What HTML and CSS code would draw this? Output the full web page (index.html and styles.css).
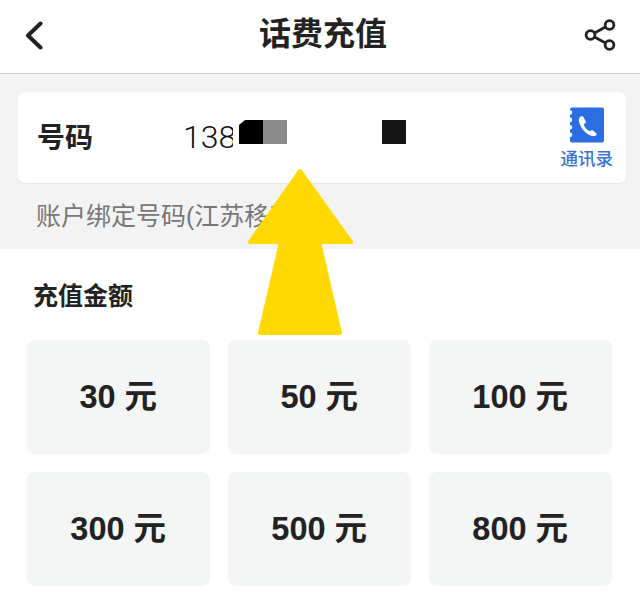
FILE: index.html
```html
<!DOCTYPE html>
<html lang="zh-CN">
<head>
<meta charset="utf-8">
<title>话费充值</title>
<link rel="stylesheet" href="styles.css">
</head>
<body>
<div class="page">
  <header class="topbar">
    <svg class="back" viewBox="0 0 20 30" width="20" height="30"><path d="M17.500 3.500 5 15.500l12.500 12" fill="none" stroke="#222" stroke-width="4" stroke-linecap="round" stroke-linejoin="round"/></svg>
    <h1 class="title">话费充值</h1>
    <svg class="share" viewBox="0 0 34 34" width="34" height="34"><g fill="none" stroke="#222" stroke-width="2.8"><circle cx="26.5" cy="7" r="4.4"/><circle cx="26.5" cy="27" r="4.4"/><circle cx="7.5" cy="17" r="4.4"/><path d="M11.5 15 22.5 9M11.5 19l11 6"/></g></svg>
  </header>
  <section class="account">
    <div class="card">
      <span class="label">号码</span>
      <span class="number">138</span>
      <div class="contacts">
        <svg class="book" viewBox="0 0 36 36" width="36" height="36"><path d="M2 2.500A2 2 0 0 1 4 .5h30a2 2 0 0 1 2 2v31a2 2 0 0 1-2 2H4a2 2 0 0 1-2-2v-3.500a2.300 2.300 0 0 0 0-4.600v-2.800a2.300 2.300 0 0 0 0-4.600v-2.800a2.300 2.300 0 0 0 0-4.600v-2.800a2.300 2.300 0 0 0 0-4.600z" fill="#2b6de5"/><path d="M11 11c1.200-1.500 3.200-2.200 4.200-1.200l2.600 4.500c.4.800 0 1.600-.8 2.200l-1.300 1c1 3 3.500 5.500 6 6.800l1.600-.8c.8-.4 1.600-.3 2.200.3l3 3c.5 1-.6 1.900-2 2.300-7 1-15.200-9-15.700-15.600-.1-1.200.3-2.100 1-3z" fill="#fff"/></svg>
        <span class="contacts-text">通讯录</span>
      </div>
    </div>
    <p class="bound">账户绑定号码(江苏移动)</p>
  </section>
  <section class="amounts">
    <h2 class="amounts-title">充值金额</h2>
    <div class="grid">
      <div class="amount">30 元</div>
      <div class="amount">50 元</div>
      <div class="amount">100 元</div>
      <div class="amount">300 元</div>
      <div class="amount">500 元</div>
      <div class="amount">800 元</div>
    </div>
  </section>
  <div class="mask mask-w"></div>
  <div class="mask mask-a"></div>
  <div class="mask mask-b"></div>
  <div class="mask mask-c"></div>
  <svg class="arrow" viewBox="0 0 108 170" width="108" height="170"><path d="M53 4 104 75H72L93 166H13L34 75H3z" fill="#ffd900" stroke="#ffd900" stroke-width="4" stroke-linejoin="round"/></svg>
</div>
</body>
</html>
```
FILE: styles.css
```css
* { box-sizing: border-box; }
html, body { margin: 0; padding: 0; background: #fff; }
body { font-family: "Liberation Sans", "Noto Sans CJK SC", sans-serif; color: #222; }
.page { position: relative; width: 640px; height: 594px; overflow: hidden; }
.topbar { height: 74px; padding: 0 23px 5px 23px; display: flex; align-items: center; justify-content: space-between; background: #fff; border-bottom: 1px solid #c8c8c8; }
.back { display: block; margin-top: 1px; }
.title { margin: 0 0 0 20px; font-size: 32px; line-height: 40px; font-weight: 700; color: #222; }
.share { display: block; margin-top: 2px; }
.account { height: 175px; padding: 18px 14px 0 18px; background: #f3f3f3; }
.card { height: 91px; display: flex; align-items: center; padding: 0 13px 0 19px; background: #fff; border-radius: 7px; box-shadow: 0 1px 2px rgba(0,0,0,.06); }
.label { width: 147px; font-size: 28px; font-weight: 700; color: #222; margin-top: -3px; }
.number { font-family: Roboto, sans-serif; font-size: 32px; font-weight: 300; color: #111; margin-top: -2px; margin-left: -1px; }
.contacts { margin-left: auto; display: flex; flex-direction: column; align-items: center; margin-top: 2px; }
.book { display: block; margin-left: -1px; }
.contacts-text { font-size: 17.500px; line-height: 24px; font-weight: 500; color: #3a73d4; margin-top: 4px; }
.bound { margin: 16px 0 0 18px; font-size: 25px; line-height: 34px; color: #777; white-space: nowrap; }
.amounts { padding: 0 28px 0 27px; background: #fff; }
.amounts-title { margin: 0; padding: 30px 0 0 6px; height: 91px; font-size: 25px; line-height: 34px; font-weight: 700; color: #222; }
.grid { display: grid; grid-template-columns: repeat(3, 182.5px); column-gap: 18.5px; row-gap: 18px; }
.amount { height: 114px; padding-bottom: 8px; display: flex; align-items: center; justify-content: center; background: #f4f5f5; border-radius: 8px; font-size: 32.500px; font-weight: 700; color: #222; white-space: pre; }
.mask { position: absolute; top: 120px; height: 24px; }
.mask-w { left: 233px; width: 6px; height: 32px; background: #fff; }
.mask-a { left: 239px; width: 24px; background: #000; clip-path: polygon(6px 0, 100% 0, 100% 100%, 0 100%, 0 5px); }
.mask-b { left: 263px; width: 24px; background: #8a8a8a; }
.mask-c { left: 382px; width: 24px; background: #141414; }
.arrow { position: absolute; left: 247px; top: 167px; filter: blur(.5px); }
```
